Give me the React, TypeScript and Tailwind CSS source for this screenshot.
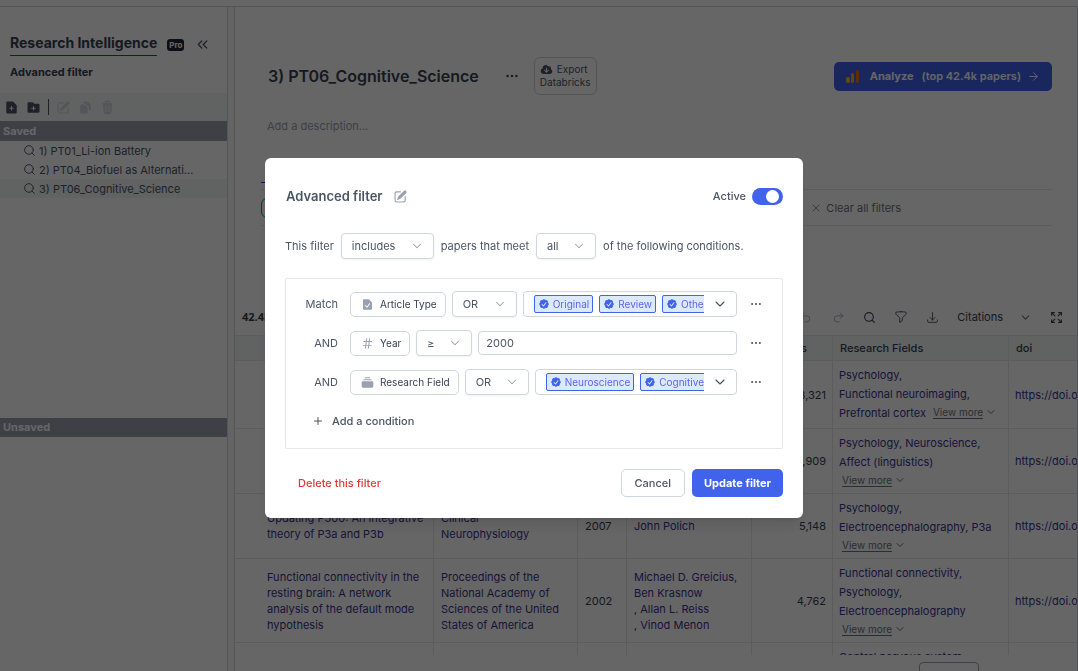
import { useState } from "react";
import {
  HiMiniCheckBadge,
  HiMiniCloudArrowDown,
  HiMiniDocumentCheck,
  HiMiniDocumentDuplicate,
  HiMiniDocumentPlus,
  HiMiniEllipsisHorizontal,
  HiMiniFolderPlus,
  HiMiniHashtag,
  HiMiniPencilSquare,
  HiMiniRectangleStack,
  HiMiniTrash,
  HiOutlineArrowDownTray,
  HiOutlineFunnel,
} from "react-icons/hi2";
import {
  ArrowRight,
  ChevronDown,
  ChevronsLeft,
  Expand,
  Plus,
  Redo2,
  Search,
  Undo2,
  X,
} from "lucide-react";

const saved = [
  "1) PT01_Li-ion Battery",
  "2) PT04_Biofuel as Alternati...",
  "3) PT06_Cognitive_Science",
];

type Paper = {
  title: string;
  journal: string;
  year: string;
  authors: string[];
  citations: string;
  fields: string[];
  inlineMore?: boolean;
  height: string;
};

const papers: Paper[] = [
  {
    title: "An integrative theory of prefrontal cortex function",
    journal: "Annual Review of Neuroscience",
    year: "2001",
    authors: ["Earl K. Miller"],
    citations: "8,321",
    fields: ["Psychology,", "Functional neuroimaging,", "Prefrontal cortex"],
    inlineMore: true,
    height: "h-[68px]",
  },
  {
    title: "Emotion circuits in the brain",
    journal: "Annual Review of Neuroscience",
    year: "2000",
    authors: ["Joseph E. LeDoux"],
    citations: "5,909",
    fields: ["Psychology, Neuroscience,", "Affect (linguistics)"],
    height: "h-[65px]",
  },
  {
    title: "Updating P300: An integrative theory of P3a and P3b",
    journal: "Clinical Neurophysiology",
    year: "2007",
    authors: ["John Polich"],
    citations: "5,148",
    fields: ["Psychology,", "Electroencephalography, P3a"],
    height: "h-[65px]",
  },
  {
    title:
      "Functional connectivity in the resting brain: A network analysis of the default mode hypothesis",
    journal:
      "Proceedings of the National Academy of Sciences of the United States of America",
    year: "2002",
    authors: [
      "Michael D. Greicius,",
      "Ben Krasnow",
      ", Allan L. Reiss",
      ", Vinod Menon",
    ],
    citations: "4,762",
    fields: ["Functional connectivity,", "Psychology,", "Electroencephalography"],
    height: "h-[84px]",
  },
  {
    title: "",
    journal: "",
    year: "",
    authors: [],
    citations: "",
    fields: ["Central nervous system,", "Neuroscience"],
    height: "h-[65px]",
  },
];

export default function App() {
  return (
    <div className="flex h-screen flex-col overflow-hidden bg-white font-['Inter',sans-serif] text-[11px] leading-4 text-gray-600">
      <div className="h-[7px] shrink-0 border-b border-gray-300" />
      <div className="flex min-h-0 flex-1">
        <Sidebar />
        <div className="w-1.5 shrink-0 bg-gray-50" />
        <Main />
      </div>
      <FilterModal />
    </div>
  );
}

const Sidebar: React.FC = () => {
  return (
    <aside className="flex w-[228px] shrink-0 flex-col border-r border-gray-300">
      <div className="flex items-center px-2.5 pt-[26px]">
        <h1 className="border-b border-blue-700 pb-0.5 text-[14px] leading-5 font-bold text-gray-700">
          Research Intelligence
        </h1>
        <span className="ml-2.5 rounded-[3px] bg-gray-800 px-0.5 text-[8px] leading-3 font-bold text-white">
          Pro
        </span>
        <button aria-label="Collapse" className="ml-2.5 text-gray-600">
          <ChevronsLeft size={17} strokeWidth={1.75} />
        </button>
      </div>
      <h2 className="mt-2 px-2.5 text-[11px] leading-4 font-bold text-gray-700">
        Advanced filter
      </h2>
      <div className="mt-[13px] flex h-7 items-center gap-[7px] bg-gray-100 pl-1 text-gray-600">
        <button aria-label="New filter">
          <HiMiniDocumentPlus size={15} />
        </button>
        <button aria-label="New folder">
          <HiMiniFolderPlus size={15} />
        </button>
        <span className="h-4 w-px bg-gray-600" />
        <button aria-label="Edit" className="text-gray-300">
          <HiMiniPencilSquare size={15} />
        </button>
        <button aria-label="Duplicate" className="text-gray-300">
          <HiMiniDocumentDuplicate size={15} />
        </button>
        <button aria-label="Delete" className="text-gray-300">
          <HiMiniTrash size={15} />
        </button>
      </div>
      <h3 className="h-5 bg-[#9ca0af] px-[3px] leading-5 font-bold text-white">
        Saved
      </h3>
      <ul className="h-[277px]">
        {saved.map((name, i) => (
          <li
            key={name}
            className={
              i === 2
                ? "flex h-[19px] items-center gap-[3px] bg-gray-100 pl-[23px]"
                : "flex h-[19px] items-center gap-[3px] pl-[23px]"
            }
          >
            <Search size={13} strokeWidth={1.75} />
            <a href="#">{name}</a>
          </li>
        ))}
      </ul>
      <h3 className="h-[19px] bg-[#9ca0af] px-[3px] leading-[19px] font-bold text-white">
        Unsaved
      </h3>
    </aside>
  );
};

const Main: React.FC = () => {
  return (
    <main className="flex min-w-0 flex-1 flex-col border-x border-gray-300">
      <div className="mt-[50px] flex items-center pr-[25px] pl-[33px]">
        <h2 className="text-[16px] leading-6 font-semibold text-gray-700">
          3) PT06_Cognitive_Science
        </h2>
        <button aria-label="More" className="ml-[25px] text-gray-700">
          <HiMiniEllipsisHorizontal size={16} />
        </button>
        <button className="ml-3.5 rounded-md border border-gray-300 px-[5px] py-[5px] text-[10px] leading-[13px]">
          <span className="flex items-center gap-1">
            <HiMiniCloudArrowDown size={13} /> Export
          </span>
          Databricks
        </button>
        <button className="ml-auto flex h-[29px] items-center rounded-[5px] bg-[#4162eb] px-3 text-[11px] font-semibold text-white">
          <svg width="14" height="13" viewBox="0 0 14 13">
            <rect x="0" y="7" width="4" height="6" rx="2" fill="#fbbc04" />
            <rect x="5" y="3" width="3" height="10" rx="1.5" fill="#f9ab00" />
            <rect x="10" y="0" width="3" height="13" rx="1.5" fill="#e37400" />
          </svg>
          <span className="ml-2.5 font-bold">Analyze</span>
          <span className="ml-2">(top 42.4k papers)</span>
          <ArrowRight size={13} strokeWidth={1.75} className="ml-1.5" />
        </button>
      </div>
      <p className="mt-[23px] pl-8 text-gray-400">Add a description...</p>

      <div className="mt-12 mr-[25px] ml-[26px]">
        <div className="flex h-2 border-b border-gray-200">
          <span className="h-px w-16 bg-[#2a2ae0]" />
        </div>
        <div className="flex h-9 items-center border-b border-gray-200">
          <span className="h-5 w-16 rounded-md border border-green-600" />
          <button className="ml-auto flex items-center gap-1 pr-[151px] text-gray-500">
            <X size={12} strokeWidth={1.5} />
            Clear all filters
          </button>
        </div>
      </div>

      <div className="mt-[83px] flex h-4 items-center pr-3.5 pl-[7px] text-gray-700">
        <span className="font-['Open_Sans',sans-serif] font-bold text-gray-700">
          42.4k papers
        </span>
        <div className="ml-auto flex items-center gap-[18px]">
          <button aria-label="Undo" className="mr-0.5 text-gray-400">
            <Undo2 size={13} strokeWidth={1.5} />
          </button>
          <button aria-label="Redo" className="text-gray-400">
            <Redo2 size={13} strokeWidth={1.5} />
          </button>
          <button aria-label="Search">
            <Search size={13} />
          </button>
          <button aria-label="Filter">
            <HiOutlineFunnel size={14} />
          </button>
          <button aria-label="Download">
            <HiOutlineArrowDownTray size={13} />
          </button>
          <button className="flex items-center gap-4">
            Citations
            <ChevronDown size={13} className="text-gray-500" />
          </button>
          <button aria-label="Full screen">
            <Expand size={13} />
          </button>
        </div>
      </div>

      <PapersTable />
      <div className="mt-[7px] ml-[684px] h-6 w-[60px] shrink-0 rounded border border-gray-400" />
    </main>
  );
};

const PapersTable: React.FC = () => {
  return (
    <div className="mt-2.5 h-[320px] shrink-0 overflow-hidden border-t border-gray-200">
      <table className="w-[980px] table-fixed border-separate border-spacing-0 text-left text-[#3b3395] [&_td]:border-r [&_td]:border-b [&_td]:border-gray-200 [&_th]:border-r [&_th]:border-b [&_th]:border-gray-200">
        <colgroup>
          <col className="w-[199px]" />
          <col className="w-[144px]" />
          <col className="w-[49px]" />
          <col className="w-[125px]" />
          <col className="w-[81px]" />
          <col className="w-[176px]" />
          <col />
        </colgroup>
        <thead>
          <tr className="h-[25px] bg-gray-100 text-gray-700 [&>th]:font-medium">
            <th className="pl-8">Title</th>
            <th className="pl-[7px]">Journal</th>
            <th className="pl-[7px]">Year</th>
            <th className="pl-[7px]">Authors</th>
            <th className="pr-[25px] text-right">Citations</th>
            <th className="pl-[7px]">Research Fields</th>
            <th className="pl-[7px]">doi</th>
          </tr>
        </thead>
        <tbody>
          {papers.map((p, i) => (
            <tr key={i} className={p.height}>
              <td className="pr-1 pl-8">
                <a href="#">{p.title}</a>
              </td>
              <td className="pr-2 pl-[7px]">
                <a href="#">{p.journal}</a>
              </td>
              <td className="pl-[7px] text-gray-700">{p.year}</td>
              <td className="pl-[7px]">
                {p.authors.map((a) => (
                  <a key={a} href="#" className="block">
                    {a}
                  </a>
                ))}
              </td>
              <td className="pr-1.5 text-right text-gray-700">{p.citations}</td>
              <td className="pl-1.5 leading-[19px]">
                {p.fields.map((f, n) => (
                  <div key={f} className="flex whitespace-nowrap">
                    <a href="#">{f}</a>
                    {p.inlineMore && n === p.fields.length - 1 && (
                      <ViewMore className="ml-[7px]" />
                    )}
                  </div>
                ))}
                {!p.inlineMore && <ViewMore className="ml-[3px]" />}
              </td>
              <td className="pl-1.5 whitespace-nowrap">
                {p.title && <a href="#">https://doi.org/10.1146</a>}
              </td>
            </tr>
          ))}
        </tbody>
      </table>
    </div>
  );
};

const ViewMore: React.FC<{ className: string }> = ({ className }) => {
  return (
    <div className={className}>
      <button className="flex h-4 items-center gap-0.5 text-[10px] text-gray-500">
        <span className="border-b border-gray-500 leading-3">View more</span>
        <ChevronDown size={12} strokeWidth={2} />
      </button>
    </div>
  );
};

const Dropdown: React.FC<{
  label: string;
  options: string[];
  className: string;
}> = ({ label, options, className }) => {
  return (
    <div className={`relative ${className}`}>
      <select
        aria-label={label}
        className="h-[26px] w-full appearance-none rounded border border-gray-300 bg-white pl-2.5 text-gray-600 shadow-xs"
      >
        {options.map((o) => (
          <option key={o}>{o}</option>
        ))}
      </select>
      <ChevronDown
        size={14}
        strokeWidth={1.75}
        className="pointer-events-none absolute top-1.5 right-2.5 text-gray-400"
      />
    </div>
  );
};

const FieldButton: React.FC<{
  icon: React.ReactNode;
  children: React.ReactNode;
}> = ({ icon, children }) => {
  return (
    <button className="flex h-[25px] items-center gap-1.5 rounded-[5px] border border-gray-300 pr-2 pl-2.5 text-[10px] text-gray-700">
      <span className="text-gray-400">{icon}</span>
      {children}
    </button>
  );
};

const Chips: React.FC<{ items: string[] }> = ({ items }) => {
  return (
    <div className="flex h-[26px] min-w-0 flex-1 items-center rounded border border-gray-300 pl-2.5">
      <div className="flex min-w-0 flex-1 gap-1.5 overflow-hidden">
        {items.map((item) => (
          <span
            key={item}
            className="flex h-[18px] shrink-0 items-center gap-[3px] rounded-xs border border-[#4162eb] bg-blue-100 px-[3px] text-[10px] text-indigo-500"
          >
            <HiMiniCheckBadge size={12} className="text-[#4162eb]" />
            {item}
          </span>
        ))}
      </div>
      <button
        aria-label="Show values"
        className="flex w-8 justify-center text-gray-600"
      >
        <ChevronDown size={16} strokeWidth={1.75} />
      </button>
    </div>
  );
};

const Condition: React.FC<{ op: string; children: React.ReactNode }> = ({
  op,
  children,
}) => {
  return (
    <div className="flex h-[26px] items-center">
      <span className="mr-3 w-10 text-right">{op}</span>
      <div className="flex min-w-0 flex-1 items-center gap-1.5">{children}</div>
      <button aria-label="Condition options" className="ml-3 text-gray-600">
        <HiMiniEllipsisHorizontal size={14} />
      </button>
    </div>
  );
};

const FilterModal: React.FC = () => {
  const [active, setActive] = useState(true);

  return (
    <div className="fixed inset-0 flex items-center justify-center bg-black/60 pt-[5px] pr-2.5">
      <div
        role="dialog"
        aria-label="Advanced filter"
        className="w-[538px] rounded-md bg-white p-5 pb-[21px] shadow-lg"
      >
        <div className="mt-2 flex h-5 items-center pl-px">
          <h2 className="text-[13px] font-semibold text-gray-600">
            Advanced filter
          </h2>
          <button aria-label="Rename" className="ml-2.5 text-gray-400">
            <HiMiniPencilSquare size={15} />
          </button>
          <label className="ml-auto flex items-center gap-1.5 font-medium">
            Active
            <input
              type="checkbox"
              checked={active}
              onChange={(e) => setActive(e.target.checked)}
              className="peer sr-only"
            />
            <span className="flex h-[17px] w-[31px] justify-start rounded-full bg-gray-300 p-0.5 pr-1 peer-checked:justify-end peer-checked:bg-[#4162eb]">
              <span className="size-[13px] rounded-full bg-white" />
            </span>
          </label>
        </div>

        <div className="mt-[27px] flex items-center gap-[7px]">
          This filter
          <Dropdown
            label="Filter mode"
            options={["includes", "excludes"]}
            className="w-[93px]"
          />
          papers that meet
          <Dropdown label="Match" options={["all", "any"]} className="w-[60px]" />
          of the following conditions.
        </div>

        <div className="mt-[19px] flex flex-col gap-[13px] rounded-xs border border-gray-200 pt-3 pr-[19px] pb-[19px] pl-3">
          <Condition op="Match">
            <FieldButton icon={<HiMiniDocumentCheck size={13} />}>
              Article Type
            </FieldButton>
            <Dropdown label="Operator" options={["OR", "AND"]} className="w-[65px]" />
            <Chips items={["Original", "Review", "Other"]} />
          </Condition>
          <Condition op="AND">
            <FieldButton icon={<HiMiniHashtag size={13} />}>Year</FieldButton>
            <Dropdown label="Comparison" options={["≥", "≤"]} className="w-14" />
            <input
              aria-label="Year"
              defaultValue="2000"
              className="h-6 min-w-0 flex-1 rounded border border-gray-300 px-[7px] text-gray-600"
            />
          </Condition>
          <Condition op="AND">
            <FieldButton icon={<HiMiniRectangleStack size={13} />}>
              Research Field
            </FieldButton>
            <Dropdown label="Operator" options={["OR", "AND"]} className="w-16" />
            <Chips items={["Neuroscience", "Cognitive psychology"]} />
          </Condition>
          <button className="mt-[5px] ml-3.5 flex h-4 items-center gap-2 self-start font-medium">
            <Plus size={12} />
            Add a condition
          </button>
        </div>

        <div className="mt-5 flex items-center">
          <button className="ml-[13px] font-medium text-[#dc3838]">
            Delete this filter
          </button>
          <button className="ml-auto h-7 rounded-[5px] border border-gray-300 px-[13px] font-medium">
            Cancel
          </button>
          <button className="ml-[7px] h-7 rounded-[5px] bg-[#4162eb] px-3 font-bold text-white">
            Update filter
          </button>
        </div>
      </div>
    </div>
  );
};
